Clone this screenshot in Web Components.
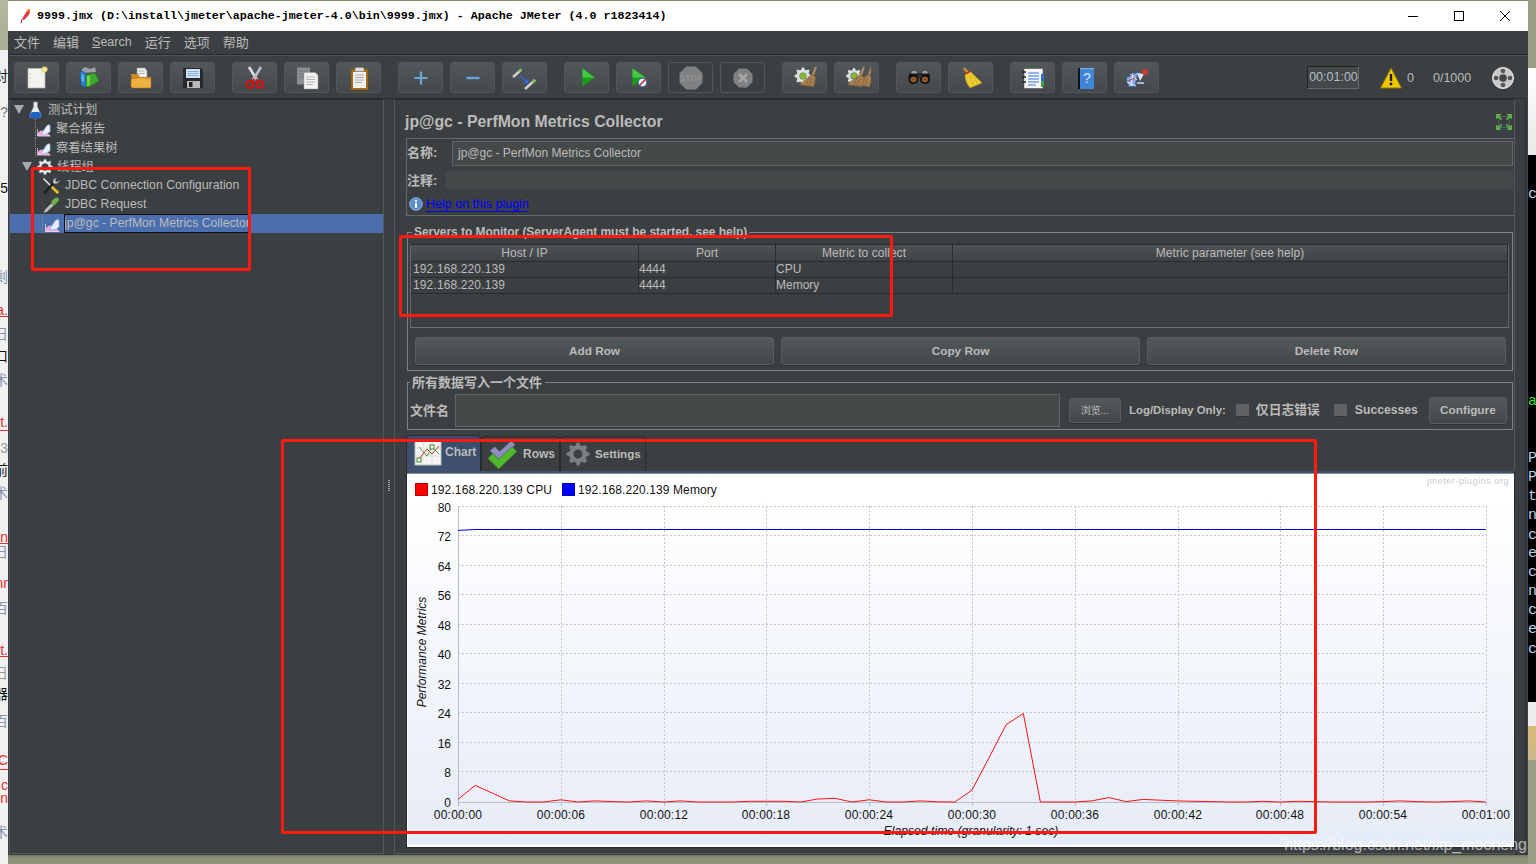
<!DOCTYPE html>
<html lang="zh"><head><meta charset="utf-8"><title>JMeter</title>
<style>
html,body{margin:0;padding:0;width:1536px;height:864px;overflow:hidden;background:#8f9478}
body{font-family:"Liberation Sans","Noto Sans CJK SC",sans-serif}
</style></head><body>
<jm-desk>
  <jm-window>
    <jm-title>9999.jmx (D:\install\jmeter\apache-jmeter-4.0\bin\9999.jmx) - Apache JMeter (4.0 r1823414)</jm-title>
    <jm-menu></jm-menu>
    <jm-toolbar></jm-toolbar>
    <jm-main>
      <jm-tree slot="tree">
        <jm-tree-row cjk pad="4" tri icon="flask" iw="13" gap="6" icongap="5">测试计划</jm-tree-row>
        <jm-tree-row cjk pad="26" guide icon="report" iw="14" gap="5">聚合报告</jm-tree-row>
        <jm-tree-row cjk pad="26" guide icon="report" iw="14" gap="5">察看结果树</jm-tree-row>
        <jm-tree-row cjk pad="12" tri icon="gear" iw="16" gap="4" icongap="5">线程组</jm-tree-row>
        <jm-tree-row pad="32" icon="tools" iw="18" gap="5">JDBC Connection Configuration</jm-tree-row>
        <jm-tree-row pad="32" icon="pipette" iw="18" gap="5">JDBC Request</jm-tree-row>
        <jm-tree-row pad="33" guide selected icon="report" iw="15" gap="5">jp@gc - PerfMon Metrics Collector</jm-tree-row>
      </jm-tree>
      <jm-panel slot="panel">
        <jm-name-panel></jm-name-panel>
        <jm-servers></jm-servers>
        <jm-file-group></jm-file-group>
        <jm-tabs></jm-tabs>
        <jm-chart></jm-chart>
      </jm-panel>
    </jm-main>
  </jm-window>
</jm-desk>
<jm-mark x="31" y="167" w="220" h="104"></jm-mark>
<jm-mark x="399" y="235" w="494" h="82"></jm-mark>
<jm-mark x="281" y="439" w="1036" h="395"></jm-mark>
<jm-watermark>https://blog.csdn.net/lxp_mocheng</jm-watermark>
<script>
const gearPath=(cx,cy,r,t,ri)=>{let d='';const n=t*4;for(let i=0;i<n;i++){const a=(i-0.5)/n*Math.PI*2,R=(i%4<2)?r:r*0.76;d+=(i?'L':'M')+(cx+R*Math.cos(a)).toFixed(2)+' '+(cy+R*Math.sin(a)).toFixed(2)}d+='Z';d+=`M${cx+ri} ${cy}A${ri} ${ri} 0 1 0 ${cx-ri} ${cy}A${ri} ${ri} 0 1 0 ${cx+ri} ${cy}Z`;return d};
const oct=(c,r)=>{const k=r*0.42;return `M${c-k} ${c-r}H${c+k}L${c+r} ${c-k}V${c+k}L${c+k} ${c+r}H${c-k}L${c-r} ${c+k}V${c-k}Z`};
const broom=(x,y,s=1)=>`<g transform="translate(${x} ${y}) scale(${s})"><path d="M9 0L6 8" stroke="#a98a62" stroke-width="2"/><path d="M5 7L9 9L7 18L-6 16Z" fill="#a97f52" stroke="#7d5c38" stroke-width=".5"/><path d="M3 9L0 16M5 10L3 17" stroke="#7d5c38" stroke-width=".6"/></g>`;
const ICONS={
 quill:`<path d="M9 1C12 1 12 4 9 8L5 12L3 11Z" fill="#e23b44"/><path d="M9 1C11 1 11.5 2.5 10.5 4.5L8 3Z" fill="#f08a2c"/><path d="M3 11L2 15" stroke="#702050" stroke-width="1"/>`,
 new:`<rect x="5" y="4.5" width="17" height="19.5" fill="#f3f3ef" stroke="#b8b8b8" stroke-width=".7"/><circle cx="21.5" cy="5.5" r="2.8" fill="#f5e590" stroke="#d8c868" stroke-width=".6"/><path d="M7 10v.6M7 14v.6M7 18v.6" stroke="#999"/>`,
 templates:`<path d="M6 6L10 3L15 5L20 3L21 8L10 9Z" fill="#9aa0a4"/><path d="M5 7L11 9L11 24L6 21Z" fill="#2a7fd0" stroke="#174f8a" stroke-width=".5"/><path d="M6 10L9 11V18L6.5 17Z" fill="#5bb0ec"/><path d="M11 11L20 9L24 17L14 23L11 23Z" fill="#3ea82c" stroke="#22701a" stroke-width=".5"/><path d="M12 12L15 11.5V21L12 22Z" fill="#70d050"/>`,
 open:`<path d="M10 4H18L20 7V14H10Z" fill="#eee" stroke="#999" stroke-width=".6"/><path d="M11.5 7h6M11.5 9.500h6" stroke="#999" stroke-width=".7"/><path d="M4 10H11L13 13H24V22H5Z" fill="#cc8a28"/><path d="M4 15Q14 12 24 15V23Q24 24 22 24H6Q4 24 4 22Z" fill="#f0b040" stroke="#a06c18" stroke-width=".5"/>`,
 save:`<path d="M4 4H22L24 6V24H4Z" fill="#26282c"/><rect x="7" y="5" width="14" height="9" fill="#cfe0f4"/><path d="M8.500 7.500h11M8.500 9.500h11M8.500 11.500h11" stroke="#7e9ec8" stroke-width=".8"/><rect x="8" y="17" width="13" height="7" fill="#b8b8b8"/><rect x="10" y="18" width="3.500" height="5" fill="#222"/>`,
 cut:`<path d="M8 3L16 16" stroke="#d9dade" stroke-width="2.800"/><path d="M20 3L12 16" stroke="#b8bac0" stroke-width="2.800"/><circle cx="9" cy="20.500" r="3.300" fill="none" stroke="#c81818" stroke-width="2.400"/><circle cx="19" cy="20.500" r="3.300" fill="none" stroke="#c81818" stroke-width="2.400"/><path d="M11 18L13 15M17 18L15 15" stroke="#c81818" stroke-width="2"/>`,
 copy:`<rect x="4" y="3.500" width="13" height="17" fill="#8c9090"/><path d="M6 7h9M6 10h9M6 13h9" stroke="#70767a"/><path d="M11 8.500H22L25 11V25H11Z" fill="#f1f1f1" stroke="#999" stroke-width=".5"/><path d="M13 13h9M13 15.500h9M13 18h9M13 20.500h7" stroke="#a8a8a8" stroke-width=".8"/>`,
 paste:`<rect x="6" y="5" width="17" height="21" rx="1" fill="#a86c1c" stroke="#70460e" stroke-width=".5"/><path d="M8 8H21V24H8Z" fill="#f0f0f0"/><rect x="10" y="3.500" width="9" height="4" rx="1" fill="#dcdcdc" stroke="#777" stroke-width=".5"/><path d="M10 11h9M10 13.500h9M10 16h9M10 18.500h7" stroke="#999" stroke-width=".8"/>`,
 plus:`<path d="M14 7.500V20.500M7.500 14H20.500" stroke="#6ca5dc" stroke-width="2.200"/>`,
 minus:`<path d="M7.500 14H20.500" stroke="#6ca5dc" stroke-width="2.400"/>`,
 toggle:`<path d="M2 13L10 6" stroke="#d0d0d0" stroke-width="2.400"/><path d="M8 7.500L10.500 5" stroke="#7cba5c" stroke-width="2.400"/><path d="M14 25L24 16" stroke="#d0d0d0" stroke-width="2.400"/><path d="M21.500 18.500L24.500 16" stroke="#7cba5c" stroke-width="2.400"/><path d="M9.500 12L16 18" stroke="#2a6ce0" stroke-width="1.600"/><path d="M17.500 14.500V19.500H12.500Z" fill="#2a6ce0"/>`,
 play:`<path d="M9.500 4.500L21.500 13.500L9.500 22.500Z" fill="#1c9c1c"/><path d="M9.500 4.500L21.500 13.500H9.500Z" fill="#40cc40"/>`,
 playno:`<path d="M7.500 4.500L20.500 13.500L7.500 22.500Z" fill="#1c9c1c"/><path d="M7.500 4.500L20.500 13.500H7.500Z" fill="#40cc40"/><circle cx="17.500" cy="18.500" r="4.200" fill="#f2f2f2" stroke="#2868c8" stroke-width="1"/><path d="M14.500 21.500L20.500 15.500" stroke="#d02828" stroke-width="1.600"/>`,
 stop:`<path d="${oct(14,11.5)}" fill="#7e8082"/><text x="14" y="17" text-anchor="middle" font-family="Liberation Sans" font-size="8.500" font-weight="bold" fill="#8f9193">STOP</text>`,
 shut:`<path d="${oct(14,9.500)}" fill="#7e8082"/><path d="M10 10L18 18M18 10L10 18" stroke="#a4a6a8" stroke-width="2.600"/>`,
 clear:`<path d="${gearPath(12,12,8.500,8,3.500)}" fill="#dfdfdf" fill-rule="evenodd"/><circle cx="12" cy="12" r="3.200" fill="#86b83c"/>${broom(15,3,1.100)}`,
 clearall:`<path d="${gearPath(11,12,8,8,3.500)}" fill="#dfdfdf" fill-rule="evenodd"/><circle cx="11" cy="12" r="3" fill="#86b83c"/>${broom(11,3,1.100)}${broom(19,3,1.100)}`,
 binoc:`<rect x="3.500" y="8" width="10" height="12" rx="4.500" fill="#141414"/><rect x="15" y="8" width="10" height="12" rx="4.500" fill="#141414"/><rect x="12" y="9" width="5" height="5" fill="#2c2c2c"/><path d="M6 9.500Q6 7 8.500 7H10.500Q12 7 12 9.500ZM17 9.500Q17 7 19 7H21Q23 7 23 9.500Z" fill="#a0a2a4"/><ellipse cx="8.500" cy="15.500" rx="3" ry="2.700" fill="#a5602c"/><ellipse cx="20" cy="15.500" rx="3" ry="2.700" fill="#a5602c"/><circle cx="8.500" cy="15.500" r="1.100" fill="#5e3414"/><circle cx="20" cy="15.500" r="1.100" fill="#5e3414"/>`,
 brush:`<path d="M7 4L11 9" stroke="#c88a30" stroke-width="2.800"/><path d="M8 10.500L14 7.500" stroke="#cc2828" stroke-width="2.200"/><path d="M8 11L14 8L25 19L13 24Q8 18 8 11Z" fill="#eecb30" stroke="#b89418" stroke-width=".5"/><path d="M12 11L17 22M15 10L21 20" stroke="#c8a420" stroke-width=".6"/>`,
 func:`<rect x="5" y="4.500" width="19" height="20" fill="#f6f6f6" stroke="#444" stroke-width=".5"/><rect x="22" y="17" width="3" height="6" fill="#40a040"/><rect x="22" y="10" width="3" height="7" fill="#2c6cd0"/><path d="M9 9h11M9 12h11M9 15h11M9 18h11M9 21h8" stroke="#2a78e0" stroke-width="1.200"/><path d="M3 8h4M3 13h4M3 18h4" stroke="#222" stroke-width="1.400"/>`,
 help:`<path d="M7 4H9V25H7Z" fill="#111"/><rect x="9" y="4" width="14" height="21" fill="#3f86d8"/><rect x="9" y="4" width="14" height="1.200" fill="#78aee8"/><text x="16" y="19" text-anchor="middle" font-family="Liberation Sans" font-size="14" fill="#d8e8fa">?</text>`,
 plugin:`<path d="M3 14L15 8L12 22L6 23Z" fill="#8aa8e0" stroke="#3460b8" stroke-width=".7"/><path d="M7 10L14 16M4 18L13 22M10 9L8 22" stroke="#e8eefc" stroke-width="1"/><path d="M5 17L12 14" stroke="#c83030" stroke-width=".9"/><path d="M14 9L21 10L17 17Z" fill="#dfe5f5"/><circle cx="22" cy="8" r="3" fill="#d03a30"/><path d="M14 19h7" stroke="#a8b4d8" stroke-width="2"/>`,
 warn:`<path d="M11 1L21.500 21H.5Z" fill="#f0c800" stroke="#8a7410" stroke-width="1"/><path d="M11 7V14" stroke="#1a1a1a" stroke-width="2.400"/><circle cx="11" cy="17" r="1.400" fill="#1a1a1a"/>`,
 globe:`<circle cx="11" cy="11" r="10.500" fill="#c8c8c8"/><circle cx="11" cy="11" r="10.500" fill="none" stroke="#e8e8e8" stroke-width="1"/><circle cx="11" cy="11" r="3.800" fill="#454545"/><circle cx="11" cy="4" r="2.300" fill="#555"/><circle cx="11" cy="18" r="2.300" fill="#555"/><circle cx="4" cy="11" r="2.300" fill="#555"/><circle cx="18" cy="11" r="2.300" fill="#555"/>`,
 expand:`<rect x="3.500" y="3.500" width="11" height="11" fill="none" stroke="#5a5f60"/><path d="M1 1h5.500L1 6.500ZM17 1h-5.500L17 6.500ZM1 17h5.500L1 11.500ZM17 17h-5.500L17 11.500Z" fill="#5cb04e"/><path d="M6.500 6.500L3 3M11.500 6.500L15 3M6.500 11.500L3 15M11.500 11.500L15 15" stroke="#5cb04e" stroke-width="1.800"/>`,
 flask:`<path d="M4.500 1H8.500V6L12.500 15Q13 18 10.500 18H2.500Q0 18 .5 15L4.500 6Z" fill="#e8eaf0" stroke="#9098a8" stroke-width=".5"/><path d="M2.500 11.500H10.500L12.500 15Q13 18 10.500 18H2.500Q0 18 .5 15Z" fill="#1e62c8"/>`,
 report:`<path d="M.5 13.500H14.500L11 10Q6 5.500 2 9Q.5 10.500 .5 13.500Z" fill="#f6a6e2"/><path d="M.5 6V13.500H14.500" fill="none" stroke="#e8e8e8" stroke-width=".8"/><path d="M5 11L10 3Q12.500 .5 14 2V9Q11 12 6 12Z" fill="#e8f0fc" stroke="#8ab0e6" stroke-width=".7"/>`,
 gear:`<path d="${gearPath(8,9,8,8,3.500)}" fill="#e8e8e8" fill-rule="evenodd" stroke="#5a6e90" stroke-width=".6"/>`,
 tools:`<path d="M1.500 1.500L17 17" stroke="#e4e4e4" stroke-width="1.600"/><path d="M10.500 10.500L17 17" stroke="#e8b818" stroke-width="3"/><path d="M2 17.500L12.500 6" stroke="#1e1e1e" stroke-width="2.400"/><path d="M12 7Q10.500 2 15.500 .5L14 4L16 5.500L18.500 3Q18.500 8 12 7Z" fill="#d6d6d6" stroke="#444" stroke-width=".5"/>`,
 pipette:`<path d="M1 18.500L2.500 14.500L10 7L13 10L5 17.500Z" fill="#b8b8b8" stroke="#222" stroke-width=".8"/><path d="M9.500 6L13 2.500Q15.500 .5 17.500 2.500T15.500 7.500L12.500 10.500Z" fill="#6cb04c" stroke="#3c7028" stroke-width=".5"/>`,
 tchart:`<rect x="1" y="1" width="26" height="25" fill="#f5f5f5" stroke="#bbb"/><path d="M1 9h26M1 17h26M9 1v25M18 1v25" stroke="#ddd"/><path d="M5 20L13 10L18 15L25 7" fill="none" stroke="#d03030"/><path d="M5 8L13 17L18 8L25 15" fill="none" stroke="#48a038"/><rect x="3" y="19" width="4" height="4" fill="#fff" stroke="#3a8a28"/><rect x="16" y="6" width="4" height="4" fill="#fff" stroke="#3a8a28"/>`,
 trows:`<path d="M3 12L8 8L13 13L25 2L29 6L13 22Z" fill="#8f8cc4" stroke="#66649a" stroke-width=".6"/><path d="M1 20L6 15L12 21L26 8L31 13L12 31Z" fill="#52b830" stroke="#2e7c18" stroke-width=".7"/>`,
 tset:`<path d="${gearPath(12,12,11.500,8,4.500)}" fill="#7b8285" fill-rule="evenodd" stroke="#5a6063" stroke-width=".5"/>`,
 info:`<circle cx="7" cy="7" r="6.300" fill="#5a90cc" stroke="#a8c4e8" stroke-width=".8"/><circle cx="7" cy="3.800" r="1.100" fill="#fff"/><rect x="6" y="5.800" width="2" height="5" fill="#fff"/>`
};
const VB={quill:'0 0 14 16',warn:'0 0 22 22',globe:'0 0 22 22',expand:'0 0 18 18',flask:'0 0 13 19',report:'0 0 15 14',gear:'0 0 16 18',tools:'0 0 19 19',pipette:'0 0 19 19',tchart:'0 0 28 27',trows:'0 0 32 32',tset:'0 0 24 24',info:'0 0 14 14'};
const ICONH={flask:18,report:14,gear:18,tools:18,pipette:18};
function def(name,render){customElements.define(name,class extends HTMLElement{connectedCallback(){if(!this.shadowRoot)this.attachShadow({mode:'open'}).innerHTML=render(this)}})}
def('jm-icon',e=>{const n=e.getAttribute('name'),w=e.getAttribute('w')||28,h=e.getAttribute('h')||w;return `<style>:host{display:inline-flex;flex:none;width:${w}px;height:${h}px}svg{width:100%;height:100%;display:block}</style><svg viewBox="${VB[n]||'0 0 28 28'}" fill="none">${ICONS[n]}</svg>`});
def('jm-desk',()=>`<style>:host{display:flex;width:1536px;height:864px;background:#8f9478}
.l,.r{flex:none;width:8px;position:relative;overflow:hidden;font-size:14px;line-height:12px}
.l{background:#f1f1f1}.r{background:#9a9f84}
.top{height:50px;background:linear-gradient(#b4b9a0,#a8ae92)}
.frag{position:absolute;right:0;white-space:nowrap;color:#8794ad}
.red{color:#e83030}.ln{position:absolute;left:0;right:0;height:1px;background:#e83030}
.bk{color:#111}.gr{color:#999}
.blk{position:absolute;left:0;right:0;top:155px;height:547px;background:#000;font-family:"Liberation Mono",monospace;font-size:15px;line-height:16px;color:#b8cfe8}
.blk span{position:absolute;left:0}
.lg{position:absolute;left:0;right:0;top:68px;height:87px;background:linear-gradient(#fff,#e8e8e4)}
.tan{position:absolute;left:0;right:0;top:702px;height:58px;background:linear-gradient(#eee 0,#eee 24px,#d8bc78 24px,#c8b888)}
.w{flex:none;width:1520px;margin:1px 0 9px;height:854px;box-shadow:0 1px 3px #666}
.lbar{position:absolute;left:0;right:0;height:1px;background:#ccc}
</style>
<div class="l"><div class="top"></div>
<span class="frag bk" style="top:70px">对</span><span class="frag" style="top:106px;color:#777">s?</span><div class="lbar" style="top:90px;height:34px;background:#e3e3e3;z-index:-1"></div><span class="frag bk" style="top:182px">5</span><span class="frag" style="top:271px">剩</span>
<span class="frag red" style="top:304px">a.</span><i class="ln" style="top:316px"></i><span class="frag" style="top:328px">日</span><span class="frag bk" style="top:350px">口</span><span class="frag" style="top:374px">术</span>
<span class="frag red" style="top:416px">t.</span><i class="ln" style="top:430px"></i><span class="frag gr" style="top:442px">23</span><span class="frag bk" style="top:464px">前</span><span class="frag" style="top:487px">术</span>
<span class="frag red" style="top:531px">n</span><i class="ln" style="top:543px"></i><span class="frag" style="top:546px">日</span><span class="frag red" style="top:577px">nr</span><span class="frag" style="top:602px">百</span>
<span class="frag red" style="top:644px">t.</span><i class="ln" style="top:656px"></i><span class="frag gr" style="top:667px">9日</span><span class="frag bk" style="top:688px">器</span><span class="frag" style="top:715px">百</span>
<span class="frag red" style="top:754px">C</span><i class="ln" style="top:769px"></i><span class="frag red" style="top:779px">c</span><span class="frag red" style="top:792px">n</span><span class="frag" style="top:826px">术</span>
</div>
<div class="w"><slot></slot></div>
<div class="r"><div class="lg"></div><div class="blk"><span style="top:32px">c</span><span style="top:239px;color:#30e030">a</span>
${[['P',459],['P',478],['t',497],['n',516],['c',536],['e',554],['c',573],['n',592],['c',611],['e',630],['c',650]].map(a=>`<span style="top:${a[1]-163}px">${a[0]}</span>`).join('')}</div><div class="tan"></div></div>`);
def('jm-window',()=>`<style>:host{display:flex;flex-direction:column;height:854px;background:#3c3f41;color:#bbb;font:12.5px "Liberation Sans","Noto Sans CJK SC",sans-serif}</style><slot></slot>`);
def('jm-title',()=>`<style>:host{display:flex;align-items:center;flex:none;height:30px;background:#fff;color:#000;font:bold 11.67px "Liberation Mono","Noto Sans CJK SC",monospace;white-space:pre}
.q{margin:-1px 4px 0 11px}.t{flex:1}.c{display:flex;align-items:center}.c span{width:46px;height:30px;display:flex;align-items:center;justify-content:center}</style>
<jm-icon class="q" name="quill" w="14" h="16"></jm-icon><span class="t"><slot></slot></span>
<div class="c"><span><svg width="12" height="12"><path d="M1 6.500H11" stroke="#000"/></svg></span><span><svg width="12" height="12"><rect x="1.500" y="1.500" width="9" height="9" fill="none" stroke="#000"/></svg></span><span><svg width="12" height="12"><path d="M1 1L11 11M11 1L1 11" stroke="#000"/></svg></span></div>`);
def('jm-menu',()=>`<style>:host{display:flex;flex:none;height:23px;padding-left:6px;gap:13px;align-items:center;font-size:13px;line-height:15px;color:#bbb;border-bottom:1px solid #2b2b2b}u{text-decoration:underline}span.s{font-size:12.500px}</style>
<span>文件</span><span>编辑</span><span class="s"><u>S</u>earch</span><span>运行</span><span>选项</span><span>帮助</span>`);
def('jm-tool',e=>`<style>:host{display:flex;flex:none;width:43px;height:29px;align-items:center;justify-content:center;border:1px solid #53575a;border-radius:3px;background:${e.hasAttribute('off')?'#3c3f41':'linear-gradient(#52575a,#45494b)'}}</style><jm-icon name="${e.getAttribute('name')}" w="28"></jm-icon>`);
def('jm-toolbar',()=>{const groups=[['new','templates','open','save'],['cut','copy','paste'],['plus','minus','toggle'],['play','playno','stop','shut'],['clear','clearall'],['binoc','brush'],['func','help','plugin']];
return `<style>:host{display:flex;flex:none;height:43px;padding:6px 0 0 6px;box-sizing:border-box;gap:17px;color:#bbb;font-size:12.500px;border-top:1px solid #505355}
.g{display:flex;gap:7px;height:31px}
.r{display:flex;align-items:center;height:31px;margin-left:131px}
.tm{width:49px;padding-left:1px;height:21px;border:1px solid;border-color:#222 #6a6a6a #6a6a6a #222;background:#45494a;text-align:center;line-height:21px;font-size:12.500px;color:#b0bcc8;margin-right:21px}
.z{margin:0 19px 0 5px}.c{margin-right:21px}</style>
${groups.map(g=>`<div class="g">${g.map(n=>`<jm-tool name="${n}" ${n=='stop'||n=='shut'?'off':''}></jm-tool>`).join('')}</div>`).join('')}
<div class="r"><div class="tm">00:01:00</div><jm-icon name="warn" w="22"></jm-icon><span class="z">0</span><span class="c">0/1000</span><jm-icon name="globe" w="22"></jm-icon></div>`});
def('jm-main',()=>`<style>:host{display:flex;flex:1;min-height:0;padding:0 10px 0 1px;margin-right:2px;border-top:1px solid #2b2b2b;border-right:1px solid #2b2b2b}
.s{flex:none;width:10px;display:flex;flex-direction:column;align-items:center;padding-top:381px;box-sizing:border-box}
.s i{width:2px;height:12px;background:repeating-linear-gradient(#aaa 0 1px,#3c3f41 1px 2px)}</style>
<slot name="tree"></slot><div class="s"><i></i></div><slot name="panel"></slot>`);
def('jm-tree',()=>`<style>:host{display:block;flex:none;width:373px;border:1px solid #55585a;border-top:1px solid #2b2b2b;margin-bottom:1px;background:#3c3f41}</style><slot></slot>`);
def('jm-tree-row',e=>{const g=e.hasAttribute('guide'),tri=e.hasAttribute('tri'),sel=e.hasAttribute('selected'),pad=+e.getAttribute('pad'),ic=e.getAttribute('icon'),cjk=e.hasAttribute('cjk');
return `<style>:host{display:flex;align-items:center;height:19px;white-space:nowrap;font-size:${sel?12.2:12.3}px;color:#bbb;${sel?'background:#4b6eaf;':''}}
.sp{flex:none;height:19px;box-sizing:border-box;${g?'border-right:1px dotted #8a8d90;':''}}
.tri{flex:none;width:0;height:0;border:5px solid transparent;border-top:9px solid #a9acae;border-bottom:0}
.t{height:19px;line-height:${cjk?21:19}px;margin-left:${e.getAttribute('gap')}px;${sel?'outline:1px solid #0e0e10;outline-offset:-1px;margin-left:4px;padding-right:1px;':''}}
jm-icon{${g?'margin-left:'+(sel?2:1)+'px;margin-top:2px;':''}}</style>
<div class="sp" style="width:${pad}px"></div>${tri?`<div class="tri"></div><div style="width:${e.getAttribute('icongap')}px;flex:none"></div>`:''}<jm-icon name="${ic}" w="${e.getAttribute('iw')}" h="${ICONH[ic]}"></jm-icon><span class="t"><slot></slot></span>`});
def('jm-panel',()=>`<style>:host{display:flex;flex-direction:column;flex:none;width:1121px;box-sizing:border-box;height:755px;border:1px solid #55585a;border-top:1px solid #2b2b2b;padding:0 0 0 11px}
.h{height:38px;flex:none;display:flex;align-items:center;justify-content:space-between;padding:6px 1px 0 0;box-sizing:border-box}
b{font-size:15.800px;color:#bbb;margin-left:-1px}</style>
<div class="h"><b>jp@gc - PerfMon Metrics Collector</b><jm-icon name="expand" w="18"></jm-icon></div><slot></slot>`);
def('jm-name-panel',()=>`<style>:host{display:block;flex:none;height:78px;box-sizing:border-box;border:1px solid #6a6a6a;border-right:0;padding:2px 0 0;font-size:13px;font-weight:bold;color:#bbb}
.r1,.r2,.r3{display:flex;align-items:center}
.r1{height:25px}.r2{height:18px;margin-top:5px}.r3{height:17px;margin-top:6px;padding-left:2px;gap:3px}
.lb{flex:none;line-height:14px;padding-bottom:2px}
.r2 .lb{padding:2px 0 0}
.i{height:25px;box-sizing:border-box;flex:none;width:1061px;background:#45494a;border:1px solid #646464;font:12px "Liberation Sans";color:#bbb;line-height:23px;padding-left:5px}
.c{flex:none;width:1067px;height:18px;background:#45494a}
a{color:#0000ff;font:12.500px "Liberation Sans";text-decoration:underline;text-underline-offset:3px}</style>
<div class="r1"><span class="lb" style="width:45px">名称:</span><div class="i">jp@gc - PerfMon Metrics Collector</div></div>
<div class="r2"><span class="lb" style="width:39px">注释:</span><div class="c"></div></div>
<div class="r3"><jm-icon name="info" w="14"></jm-icon><a>Help on this plugin</a></div>`);
def('jm-btn',()=>`<style>:host{display:flex;align-items:center;justify-content:center;box-sizing:border-box;flex:none;border:1px solid #595d5f;border-radius:3px;background:linear-gradient(#53585a,#43474a);font:bold 11.800px "Liberation Sans","Noto Sans CJK SC",sans-serif;color:#bbb;box-shadow:0 1px 0 #2e3032}</style><slot></slot>`);
const fs=`fieldset{margin:0;border:1px solid #828282;min-width:0;box-sizing:border-box}legend{padding:0 2px;margin-left:3px;font-weight:bold;color:#bbb;line-height:14px}`;
def('jm-servers',()=>`<style>:host{display:block;flex:none;margin:9px 1px 0 1px;font-size:12px}
${fs}
legend{margin-left:2px;letter-spacing:-.05px}
fieldset{height:146px;padding:5px 3px 5px 2px}
.t{height:84px;box-sizing:border-box;border:1px solid #2b2b2b;border-left-color:#666;border-right-color:#666;border-bottom:1px solid #737373;font-size:12px}
.row{display:grid;grid-template-columns:228px 137px 177px 1fr;height:16px;line-height:15.500px;border-bottom:1px solid #2b2b2b;box-sizing:border-box;color:#bbb}
.row span{border-right:1px solid #2b2b2b;padding-left:0}
.row span:first-child{padding-left:2px;letter-spacing:.13px}
.row.h{height:17px;background:linear-gradient(#505356,#3f4244);text-align:center;line-height:16px}
.row.h span{padding:0;letter-spacing:.04px}
.b{display:flex;gap:7px;margin:9px 0 0 5px}jm-btn{width:359px;height:28px}</style>
<fieldset><legend>Servers to Monitor (ServerAgent must be started, see help)</legend>
<div class="t"><div class="row h"><span>Host / IP</span><span>Port</span><span>Metric to collect</span><span>Metric parameter (see help)</span></div>
<div class="row"><span>192.168.220.139</span><span>4444</span><span>CPU</span><span></span></div>
<div class="row"><span>192.168.220.139</span><span>4444</span><span>Memory</span><span></span></div></div>
<div class="b"><jm-btn>Add Row</jm-btn><jm-btn>Copy Row</jm-btn><jm-btn>Delete Row</jm-btn></div></fieldset>`);
def('jm-file-group',()=>`<style>:host{display:block;flex:none;margin:4px 1px 0 1px;font-size:13px}${fs}
fieldset{height:55px;padding:5px 5px 0 2px;display:block}
legend{margin-left:0;padding:0 3px 0 2px;position:relative;top:1px}
.r{display:flex;align-items:center;height:33px;white-space:nowrap;color:#bbb;font-weight:bold}
.r span{line-height:14px;padding-bottom:2px}
.r span.f{padding-bottom:0}
.i{width:605px;height:33px;box-sizing:border-box;flex:none;background:#45494a;border:1px solid #646464;margin:0 9px 0 6px}
.k{width:13px;height:13px;flex:none;background:#5f6163;border-bottom:1px solid #303234;border-radius:1px;box-sizing:border-box}
jm-btn{height:25px;padding-bottom:2px}</style>
<fieldset><legend>所有数据写入一个文件</legend><div class="r"><span class="f">文件名</span><div class="i"></div>
<jm-btn style="width:52px;font-size:10px;font-weight:normal">浏览...</jm-btn><span style="margin:0 10px 0 8px;font-size:11.400px">Log/Display Only:</span><div class="k"></div><span style="margin:0 14px 0 7px;font-size:12.800px">仅日志错误</span><div class="k"></div><span style="margin:0 11px 0 8px;font-size:12.200px">Successes</span><jm-btn style="width:78px;height:27px">Configure</jm-btn></div></fieldset>`);
def('jm-tabs',()=>`<style>:host{display:flex;flex:none;height:36px;margin-top:5px;font:bold 12px "Liberation Sans",sans-serif;color:#bbb;align-items:flex-end}
.t{display:flex;align-items:center;box-sizing:border-box;height:35px;border:1px solid #2b2b2b;border-bottom:0;border-radius:4px 4px 0 0;padding-left:5px;gap:4px;flex:none}
.on{height:36px;background:linear-gradient(#3a4c6c,#41526f);width:75px;padding-left:7px;gap:3px;align-items:flex-start;padding-top:3px}
.on span{margin-top:6px}</style>
<div class="t on"><jm-icon name="tchart" w="28" h="27"></jm-icon><span>Chart</span></div>
<div class="t" style="width:79px"><jm-icon name="trows" w="31"></jm-icon><span style="margin-left:1px">Rows</span></div>
<div class="t" style="width:86px"><jm-icon name="tset" w="24"></jm-icon><span style="margin-left:1px;font-size:11.600px;padding-bottom:2px">Settings</span></div>`);
def('jm-chart',()=>{
 const X=s=>458+s*17.13,Y=v=>802-v*3.6875;
 const cpu=[.7,4.5,2.4,.3,0,0,.6,0,.3,.1,0,.3,0,.3,0,0,0,.2,.2,.2,0,.8,1,0,.6,0,0,.3,.05,0,3.2,12,21,24,0,0,0,.3,1.2,.1,.7,.5,.3,.2,.1,0,0,.2,0,.2,.1,0,0,0,.1,.3,.1,0,.1,.3,0];
 const mem=[73.65,73.9];for(let i=2;i<=60;i++)mem.push(73.9);
 const T=`font-family="Liberation Sans"`;let g='';
 for(let i=0;i<=10;i++){const y=802-i*29.5;if(i)g+=`<path d="M458 ${Math.floor(y-1)+.5}H1486" stroke="#c6c6ca" stroke-dasharray="2 2"/>`;g+=`<text x="451" y="${Math.floor(y)+5}" text-anchor="end" font-size="12" ${T} fill="#111">${i*8}</text>`}
 const lab=['00:00:00','00:00:06','00:00:12','00:00:18','00:00:24','00:00:30','00:00:36','00:00:42','00:00:48','00:00:54','00:01:00'];
 lab.forEach((l,i)=>{const x=Math.round(458+i*102.8);if(i)g+=`<path d="M${x+.5} 506V802" stroke="#c6c6ca" stroke-dasharray="2 2"/>`;g+=`<path d="M${x+.5} 802v4" stroke="#b8bcc8"/><text x="${x}" y="819" text-anchor="middle" font-size="12" letter-spacing=".2" ${T} fill="#111">${l}</text>`});
 const line=(d,c)=>`<polyline fill="none" stroke="${c}" stroke-width="1" points="${d.map((v,i)=>X(i).toFixed(1)+','+Y(v).toFixed(1)).join(' ')}"/>`;
 return `<style>:host{display:block;flex:none;width:1109px;height:377px;box-sizing:border-box;background:linear-gradient(#3f4f6e 0,#3f4f6e 2px,#8a8f96 2px,#8a8f96 3px,#fff 3px);padding:3px 2px 2px 1px;border:1px solid #2b2b2b;border-top:0}svg{display:block;width:1105px;height:371px}</style>
 <svg viewBox="408 474 1105 371"><defs><linearGradient id="bg" x1="0" y1="0" x2="0" y2="1"><stop offset="0" stop-color="#fff"/><stop offset=".06" stop-color="#fff"/><stop offset="1" stop-color="#e6ecf7"/></linearGradient></defs>
 <rect x="408" y="474" width="1105" height="371" fill="url(#bg)"/>
 <rect x="415.500" y="483.500" width="12" height="12" fill="#f00" stroke="#b00"/><text x="431" y="494" font-size="12" letter-spacing=".12" ${T} fill="#111">192.168.220.139 CPU</text>
 <rect x="562.500" y="483.500" width="12" height="12" fill="#00f" stroke="#00b"/><text x="578" y="494" font-size="12" letter-spacing=".1" ${T} fill="#111">192.168.220.139 Memory</text>
 <text x="1509" y="484" text-anchor="end" font-size="9" letter-spacing=".55" ${T} fill="#c8ccd4">jmeter-plugins.org</text>
 ${g}<path d="M458.500 507V802.500H1486" fill="none" stroke="#b8bcc8"/>
 ${line(mem,'#0000e8')}${line(cpu,'#ff1010')}
 <text transform="translate(426 652) rotate(-90)" text-anchor="middle" font-size="12" font-style="italic" ${T} fill="#111">Performance Metrics</text>
 <text x="971" y="835" text-anchor="middle" font-size="12.200" font-style="italic" ${T} fill="#111">Elapsed time (granularity: 1 sec)</text></svg>`});
def('jm-mark',e=>`<style>:host{position:absolute;left:${e.getAttribute('x')}px;top:${e.getAttribute('y')}px;width:${e.getAttribute('w')}px;height:${e.getAttribute('h')}px;box-sizing:border-box;border:3px solid #ff1a10;border-radius:2px;pointer-events:none}</style>`);
def('jm-watermark',()=>`<style>:host{position:absolute;right:9px;top:836px;font:16px "Liberation Sans",sans-serif;color:rgba(255,255,255,.62);white-space:nowrap}</style><slot></slot>`);
</script>
</body></html>
